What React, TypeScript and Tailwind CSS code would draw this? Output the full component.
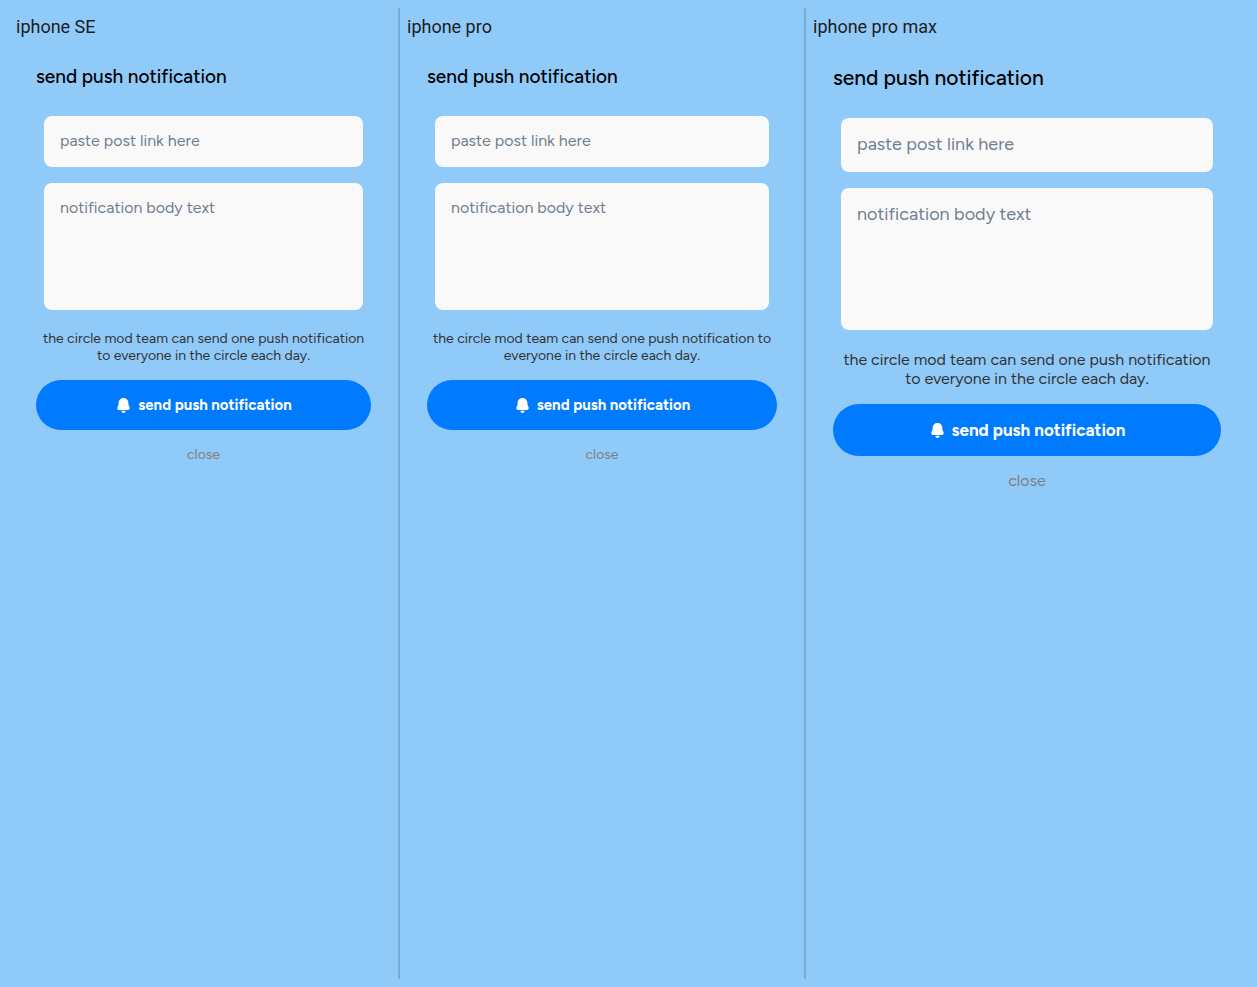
import React from "react";
import { clsx } from "clsx";

type Size = "regular" | "large";

type Device = { id: string; name: string; size: Size; edge: string };

const devices: Device[] = [
  { id: "se", name: "iphone SE", size: "regular", edge: "border-l-transparent" },
  { id: "pro", name: "iphone pro", size: "regular", edge: "" },
  { id: "pro-max", name: "iphone pro max", size: "large", edge: "border-r-transparent" },
];

function BellIcon() {
  return (
    <svg viewBox="0 0 13 16" className="h-4 w-[13px] shrink-0" fill="currentColor" aria-hidden="true">
      <path d="M6.5 1C3.4 1 1.7 3.1 1.6 5.8L1.5 7.8C1.4 8.8 0.3 9.4 0.3 11C0.3 12.4 1.2 13.1 2.6 13.1H10.4C11.8 13.1 12.7 12.4 12.7 11C12.7 9.4 11.6 8.8 11.5 7.8L11.4 5.8C11.3 3.1 9.6 1 6.5 1Z" />
      <path d="M4.4 13.8H8.6C8.6 15.1 7.8 15.9 6.5 15.9S4.4 15.1 4.4 13.8Z" />
    </svg>
  );
}

function NotificationForm({ id, size }: { id: string; size: Size }) {
  const large = size === "large";
  return (
    <form className="flex flex-col p-5 font-['Figtree','Lato',sans-serif]" onSubmit={(e) => e.preventDefault()}>
      <h2 className={clsx("font-medium text-black", large ? "text-[21px] leading-7" : "text-[19px] leading-[26px]")}>
        send push notification
      </h2>
      <div className="mt-[26px] flex flex-col gap-4 px-2">
        <input
          id={`${id}-link`}
          type="text"
          aria-label="post link"
          placeholder="paste post link here"
          className={clsx(
            "w-full rounded-lg bg-[#f9f9f9] px-4 pb-0.5 text-black outline-none placeholder:text-[#708090]",
            large ? "h-[54px] text-[18px]" : "h-[51px] text-[16px]",
          )}
        />
        <textarea
          id={`${id}-body`}
          aria-label="notification body"
          placeholder="notification body text"
          className={clsx(
            "block w-full resize-none rounded-lg bg-[#f9f9f9] px-4 py-[15px] text-black outline-none placeholder:text-[#708090]",
            large ? "h-[142px] text-[18px] leading-[22px]" : "h-[127px] text-[16px] leading-5",
          )}
        />
      </div>
      <p
        className={clsx(
          "mt-5 px-1 text-center text-[#333333]",
          large ? "text-[16px] leading-[19px]" : "text-[14px] leading-[17px]",
        )}
      >
        the circle mod team can send one push notification to everyone in the circle each day.
      </p>
      <button
        type="submit"
        className={clsx(
          "mt-4 flex items-center justify-center gap-2 rounded-full bg-[#007aff] pl-0.5 font-bold text-white",
          large ? "h-[52px] text-[17px] leading-[22px]" : "h-[50px] text-[15px]",
        )}
      >
        <BellIcon />
        send push notification
      </button>
      <button
        type="button"
        className={clsx("mt-4 self-center leading-[17px] text-[#808080]", large ? "text-[16px]" : "text-[14px]")}
      >
        close
      </button>
    </form>
  );
}

export default function App() {
  return (
    <main className="grid min-h-screen grid-cols-[391fr_406fr_444fr] bg-[#90caf9] p-2">
      {devices.map((device) => (
        <section key={device.id} className={clsx("min-w-0 border-x border-[#7babd3] px-[7px] pt-1", device.edge)}>
          <h1 className="mb-0.5 font-['Roboto',sans-serif] text-[18px] leading-[30px] text-[#1d1d1d]">{device.name}</h1>
          <NotificationForm id={device.id} size={device.size} />
        </section>
      ))}
    </main>
  );
}
